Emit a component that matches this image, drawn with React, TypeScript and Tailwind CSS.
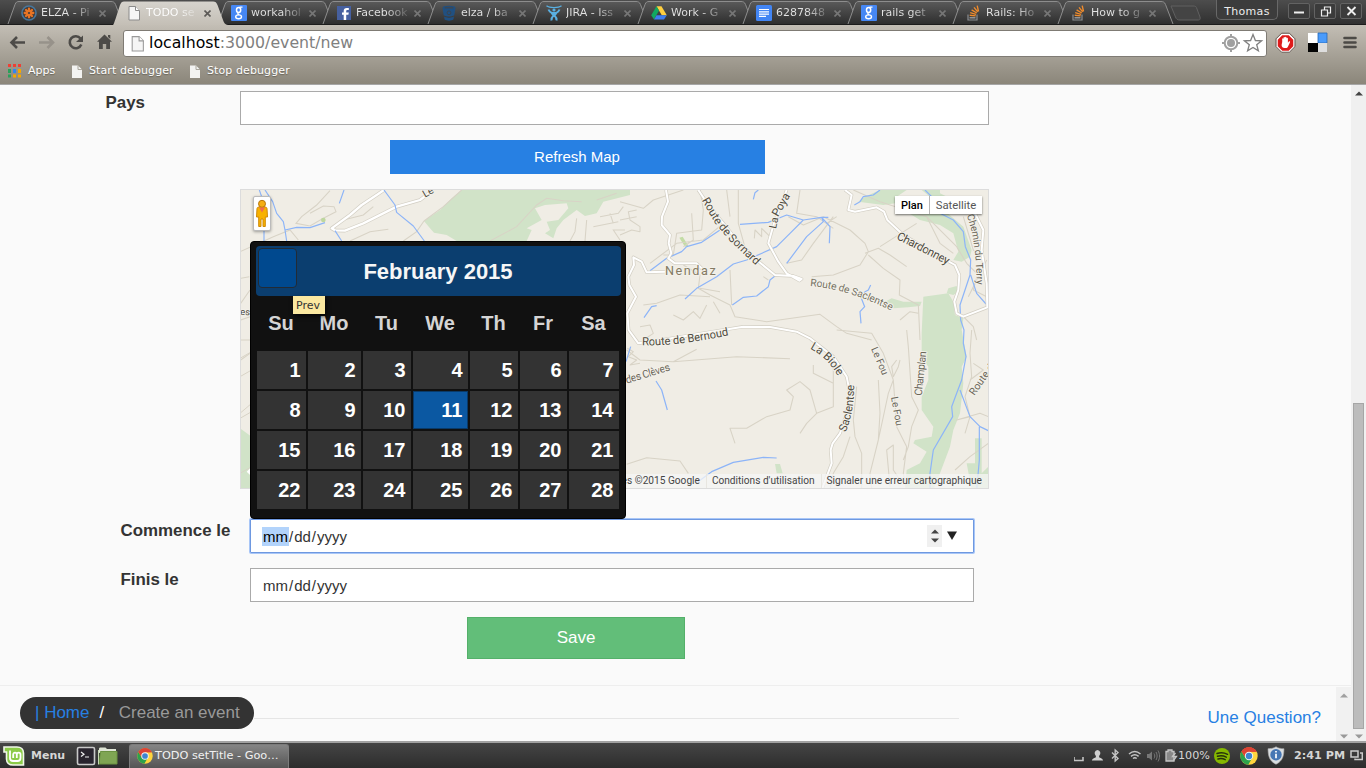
import React from "react";

const DEJAVU = "font-['DejaVu_Sans',sans-serif]";
const ARIAL = "font-['Liberation_Sans',sans-serif]";

/* ---------- favicons ---------- */

const GoogleIcon = () => (
  <svg width="16" height="16" viewBox="0 0 16 16">
    <rect width="16" height="16" rx="1" fill="#4687f4" />
    <g fill="none" stroke="#fff">
      <ellipse cx="7.6" cy="5" rx="2.1" ry="2.5" strokeWidth="1.5" />
      <ellipse cx="7.6" cy="11.8" rx="2.9" ry="1.9" strokeWidth="1.4" />
      <path d="M8.5 2.2h3M8.2 7.6c-2 .6-2 1.4 0 2.2" strokeWidth="1.2" />
    </g>
  </svg>
);

const ElzaIcon = () => (
  <svg width="16" height="16" viewBox="0 0 16 16">
    <circle cx="8" cy="8" r="7" fill="#463c38" stroke="#47779d" strokeWidth="1.6" />
    <g stroke="#e87424" strokeWidth="2.3" strokeLinecap="round">
      <path d="M8 3.7v8.600M3.700 8h8.600M5 5l6 6M11 5l-6 6" />
    </g>
    <circle cx="8" cy="8" r="1.1" fill="#463c38" />
  </svg>
);

const FileIcon = ({ size = 16, stroke = "#8b8b8b" }: { size?: number; stroke?: string }) => (
  <svg width={size} height={size} viewBox="0 0 16 16">
    <path d="M3 1.5h6.5l4 4v9.5H3z" fill="#f5f5f5" stroke={stroke} />
    <path d="M9.5 1.5v4h4" fill="#fff" stroke={stroke} />
  </svg>
);

const FacebookIcon = () => (
  <svg width="16" height="16" viewBox="0 0 16 16">
    <rect x="1" y="1" width="14" height="14" fill="#4660a0" />
    <path d="M10.2 15V9.8h2.2l.4-2.2h-2.6V6.3c0-.8.4-1.2 1.3-1.2h1.3V3h-2C8.700 3 7.700 4.200 7.700 6v1.600H6v2.200h1.700V15z" fill="#fff" />
  </svg>
);

const BucketIcon = () => (
  <svg width="16" height="16" viewBox="0 0 16 16">
    <path d="M1.500 3l1.200 7.200c2.500 1.700 8.100 1.700 10.600 0L14.500 3z" fill="#205081" />
    <path d="M3 11.600l.6 3c2 1.400 6.800 1.400 8.800 0l.6-3c-2.600 1.400-7.400 1.400-10 0z" fill="#205081" />
    <ellipse cx="8" cy="2.600" rx="6.500" ry="1.900" fill="#205081" />
    <ellipse cx="8" cy="2.700" rx="4.500" ry=".9" fill="#3c4754" />
    <circle cx="8" cy="7.800" r="1.900" fill="none" stroke="#3a4450" strokeWidth="1" />
  </svg>
);

const JiraIcon = () => (
  <svg width="16" height="16" viewBox="0 0 16 16" fill="none" stroke="#59afe1">
    <path d="M.5.8c3 2.400 12 2.400 15 0" strokeWidth="1.400" />
    <circle cx="8" cy="5" r="1.600" fill="#59afe1" stroke="none" />
    <path d="M2.500 4.500c1.200 3 3.500 3.600 5.500 3.600s4.300-.6 5.500-3.600M5.600 8c1.300 1.500 3.500 1.500 4.800 0M5.500 15.500c-.5-3 1-4 2.500-5.500 1.500 1.500 3 2.500 2.500 5.500M5.700 8.300L8 10.500l2.300-2.200" strokeWidth="2" />
  </svg>
);

const DriveIcon = () => (
  <svg width="16" height="16" viewBox="0 0 16 16">
    <path d="M5.500 1.200h5l5.300 9h-5z" fill="#ffcf3f" />
    <path d="M5.500 1.200L8 5.500l-5 9-2.800-4.300z" fill="#11a861" />
    <path d="M5.500 10.200h10.300L13 14.600H3z" fill="#3e7ef0" />
  </svg>
);

const DocsIcon = () => (
  <svg width="16" height="16" viewBox="0 0 16 16">
    <rect width="16" height="16" rx="1.500" fill="#4285f4" />
    <path d="M3 4.500h10M3 6.800h10M3 9.100h10M3 11.400h7" stroke="#fff" strokeWidth="1.200" />
  </svg>
);

const StackIcon = () => (
  <svg width="16" height="16" viewBox="0 0 16 16" fill="none">
    <path d="M2 9.500v5.500h9V9.500" stroke="#8a8d90" strokeWidth="1.200" />
    <path d="M3.500 12.800h6" stroke="#9b9da0" strokeWidth="1.400" />
    <path d="M3.700 10.300l6 .6M4.200 7.600l5.800 1.700M5.600 4.800l5.200 3.200M8 2.400l3.700 4.500M11.200.6l1.300 5.900" stroke="#ef8b2c" strokeWidth="1.400" />
  </svg>
);

const ChromeIcon = ({ size }: { size: number }) => (
  <svg width={size} height={size} viewBox="0 0 18 18">
    <circle cx="9" cy="9" r="8.700" fill="#ffd53e" />
    <path d="M9 9L1.500 4.600A8.700 8.700 0 0 1 16.600 4.800H9z" fill="#dd4335" />
    <path d="M1.500 4.600A8.700 8.700 0 0 0 8.300 17.700l4-7L9 9 5.600 11z" fill="#2da24c" />
    <path d="M9 4.800h7.600A8.700 8.700 0 0 0 1.500 4.600L5.400 11z" fill="#dd4335" />
    <circle cx="9" cy="9" r="4.200" fill="#f3f3f3" />
    <circle cx="9" cy="9" r="3.200" fill="#3f85cf" />
  </svg>
);

/* ---------- window chrome ---------- */

const tabs: { title: string; icon: React.ReactNode; active?: boolean }[] = [
  { title: "ELZA - Pi", icon: <ElzaIcon /> },
  { title: "TODO se", icon: <FileIcon />, active: true },
  { title: "workahol", icon: <GoogleIcon /> },
  { title: "Facebook", icon: <FacebookIcon /> },
  { title: "elza / ba", icon: <BucketIcon /> },
  { title: "JIRA - Iss", icon: <JiraIcon /> },
  { title: "Work - G", icon: <DriveIcon /> },
  { title: "6287848", icon: <DocsIcon /> },
  { title: "rails get", icon: <GoogleIcon /> },
  { title: "Rails: Ho", icon: <StackIcon /> },
  { title: "How to g", icon: <StackIcon /> },
];

const TabStrip = () => (
  <div className="relative flex h-[25px] shrink-0 border-b border-[#1c1c1c] bg-linear-to-b from-[#4d4d4d] to-[#303030] pl-[8px]">
    {tabs.map((t, i) => (
      <div key={i} className={t.active ? "relative z-10 flex h-[25px] w-[105px] shrink-0 items-center pl-[13px]" : "relative flex h-[25px] w-[105px] shrink-0 items-center pl-[13px]"}>
        <svg className="absolute top-0 left-0 overflow-visible" width="118" height="25" viewBox="0 0 118 25">
          <defs>
            <linearGradient id="tabOff" x1="0" y1="0" x2="0" y2="1">
              <stop offset="0" stopColor="#5a5a5a" />
              <stop offset="1" stopColor="#2e2e2e" />
            </linearGradient>
            <linearGradient id="tabOn" x1="0" y1="0" x2="0" y2="1">
              <stop offset="0" stopColor="#d6d3cd" />
              <stop offset="1" stopColor="#c4bfb6" />
            </linearGradient>
          </defs>
          {t.active ? (
            <path d="M3 25C4 24 4.500 21.500 5.500 19L10 5C11 2.500 12 1.500 14 1.500H103C105.500 1.500 106.500 2.500 107.500 5L113 20C114 23 115 24.500 118 25Z" transform="translate(-3 0)" fill="url(#tabOn)" />
          ) : (
            <path d="M0 24L7 4.500C8 2 9 1.500 11 1.500H103C105 1.500 106.500 2 107.500 4.500L115 24" fill="url(#tabOff)" stroke="#8d8d8d" />
          )}
        </svg>
        <span className="relative w-4">{t.icon}</span>
        <span className={t.active
          ? `relative ml-[4px] w-[51px] whitespace-nowrap bg-linear-to-r from-white from-60% to-white/20 bg-clip-text text-[11px] leading-[16px] text-transparent ${DEJAVU}`
          : `relative ml-[4px] w-[51px] whitespace-nowrap bg-linear-to-r from-[#e4e4e4] from-60% to-[#e4e4e4]/20 bg-clip-text text-[11px] leading-[16px] text-transparent ${DEJAVU}`}>
          {t.title}
        </span>
        <svg className="relative mt-px ml-[7px]" width="7" height="7" viewBox="0 0 7 7">
          <path d="M.5.500l6 6M6.500.500l-6 6" stroke={t.active ? "#5c5a57" : "#777"} strokeWidth="1.600" />
        </svg>
      </div>
    ))}
    <svg className="mt-[5px] ml-[7px]" width="32" height="16" viewBox="0 0 32 16">
      <path d="M1 1h22c3 0 3 .5 4 3l3 8c.5 2 0 3-1.500 3H10c-2.500 0-3.500-.5-4.500-3z" fill="#444" stroke="#606060" />
    </svg>
    <div className="ml-auto flex pr-[4px]">
      <div className={`mr-[6px] h-[20px] w-[62px] rounded-b-[5px] border border-t-0 border-[#686868] bg-[#3c3c3c] text-center text-[11px] leading-[23px] tracking-[0.3px] text-[#ececec] ${DEJAVU}`}>Thomas</div>
      {[
        <path d="M5 10h10" strokeWidth="2" />,
        <path d="M6.500 7.500h6v6h-6zM9.500 7V4.500h6v6H13" strokeWidth="1.200" />,
        <path d="M6.500 4.500l8 8M14.500 4.500l-8 8" strokeWidth="1.800" />,
      ].map((p, i) => (
        <div key={i} className="mt-[3px] ml-[4px] h-[16px] w-[22px] rounded-[2px] border border-[#636363] bg-[#3b3b3b]">
          <svg width="20" height="14" viewBox="0 1.5 20 14" fill="none" stroke="#eee">{p}</svg>
        </div>
      ))}
    </div>
  </div>
);

const BookmarkFile = () => (
  <svg width="10" height="13" viewBox="0 0 10 13">
    <path d="M0 .500h6l4 4V13H0z" fill="#f3f3f1" />
    <path d="M6 .500v4h4" fill="none" stroke="#aaa69c" />
  </svg>
);

const Toolbar = () => (
  <div className="flex h-[60px] shrink-0 flex-col border-b border-[#a6a6a6] bg-linear-to-b from-[#c3beb5] to-[#8b867a]">
    <div className="flex h-[35px] shrink-0 items-center pt-[1px]">
      <svg width="123" height="30" viewBox="0 0 123 30" fill="none">
        <g stroke="#4d4b48" strokeWidth="2.600">
          <path d="M25 14.500H12M17 9l-5.500 5.500L17 20" />
          <path d="M39 14.500h13M47.500 9l5.500 5.500-5.500 5.500" stroke="#97928a" />
          <path d="M80.500 10.500a6 6 0 1 0 .8 6" />
        </g>
        <path d="M83 7.500v6.500h-7z" fill="#4d4b48" />
        <path d="M104.500 6.500l7.500 7.300h-2V21h-3.800v-5h-3.400v5H99v-7.200h-2zM108 7h2.300v4L108 9z" fill="#4d4b48" />
      </svg>
      <div className="flex h-[27px] w-[1144px] items-center rounded-[3px] border border-[#7f7b74] bg-white pl-[5px]">
        <FileIcon size={17} stroke="#999" />
        <span className={`ml-[3px] text-[15.750px] leading-[20px] text-[#808080] ${DEJAVU}`}><span className="text-black">localhost</span>:3000/event/new</span>
        <svg className="ml-auto" width="44" height="22" viewBox="0 0 44 22" fill="none">
          <circle cx="9" cy="11" r="6.300" stroke="#a0a0a0" strokeWidth="2" />
          <circle cx="9" cy="11" r="4" fill="#a0a0a0" />
          <path d="M9 2v3M9 17v3M0 11h3M15 11h3" stroke="#a0a0a0" strokeWidth="2" />
          <path d="M31 2.500l2.400 6 6.200.3-4.900 3.900 1.700 6.200L31 15.400l-5.400 3.500 1.700-6.200-4.900-3.900 6.200-.3z" stroke="#808080" strokeWidth="1.300" />
        </svg>
      </div>
      <svg className="ml-[6px]" width="90" height="24" viewBox="0 0 90 24">
        <path d="M9.500 2.500h7l5 5v7l-5 5h-7l-5-5v-7z" transform="translate(-.5 1)" fill="#de1b1b" stroke="#fff" strokeWidth="1.500" />
        <path d="M8.600 2.200h7.800l5.600 5.600v7.800l-5.600 5.600H8.600L3 15.600V7.800z" fill="none" stroke="#5d504a" strokeWidth=".9" />
        <path d="M9.200 11V8c0-1 1.300-1 1.300 0V6.800c0-1 1.500-1 1.500 0v-.3c0-1 1.500-1 1.500 0v1c0-1 1.400-1 1.400 0v4.200l1-1.200c.8-.6 1.500 0 1 .9l-2 4.300c-.4.900-1 1.200-2 1.200h-1.400c-1.700 0-2.900-1.200-2.900-3z" fill="#fff" />
        <path d="M35 2h10v10H35z" fill="#fff" />
        <path d="M45 2h9v10h-9z" fill="#4a9bfb" stroke="#2768b5" strokeWidth=".8" />
        <path d="M35 12h10v9H35z" fill="#050505" />
        <path d="M45 12h9v9h-9z" fill="#dedede" />
        <path d="M71.500 7h11M71.500 11.500h11M71.500 16h11" stroke="#4c4a46" strokeWidth="2.600" strokeLinecap="round" />
      </svg>
    </div>
    <div className={`mt-px flex h-[20px] shrink-0 items-center pl-[8px] text-[11px] leading-[16px] text-white [text-shadow:0_1px_1px_rgba(60,55,45,.5)] ${DEJAVU}`}>
      <svg className="mb-px" width="13" height="14" viewBox="0 0 13 14">
        <path d="M0 0h3v3H0zM5 0h3v3H5zM10 0h3v3h-3z" fill="#ee4035" />
        <path d="M0 5h3v4H0z" fill="#2ba05a" /><path d="M5 5h3v4H5z" fill="#3385f0" /><path d="M10 5h3v4h-3z" fill="#f5a800" />
        <path d="M0 10.500h3v3H0z" fill="#2ba05a" /><path d="M5 10.500h3v3H5zM10 10.500h3v3h-3z" fill="#f5a800" />
      </svg>
      <span className="ml-[7px] w-[44px]">Apps</span>
      <BookmarkFile />
      <span className="ml-[7px] w-[101px] tracking-[0.100px]">Start debugger</span>
      <BookmarkFile />
      <span className="ml-[7px] tracking-[0.100px]">Stop debugger</span>
    </div>
  </div>
);

/* ---------- map ---------- */

const third = "scale(.33333)";
const halo = { stroke: "#f3f1ea", strokeWidth: 6, paintOrder: "stroke" as const, strokeLinejoin: "round" as const };

const white = [
  "M138 30L144 65L126 110L125 135L150 165L146 190L154 220L145 235L165 250L230 250L250 270",
  "M235 30L265 75L310 130L350 180L410 240L465 285L520 288L545 297L538 302L500 280L475 245L445 190L462 130L500 30",
  "M675 30L695 45L685 90L705 95L770 82L792 95L802 120L850 165L960 230L1005 255L1018 285L1015 330L1003 365L1010 400L1030 410L1102 382L1100 310L1085 210L1090 150L1050 70",
  "M135 275L80 277L65 245L40 232L42 255L25 290L28 315L48 350L22 400L26 450L55 490L90 485L210 466L370 440L450 441L530 455L570 475L640 530L680 590L690 640L680 700L660 760L638 790L632 810L635 850L605 930",
];

const roads = [
  "M0 165L35 150L60 155L60 140L30 120L25 95L50 90M0 65L70 85L100 60L190 30M240 30L250 90L245 150L170 160L160 225L130 225M215 100L220 180L190 200M355 30L355 130L380 220M90 250L170 190L250 180L310 130M320 30L330 110M0 120L50 110",
  "M500 250L545 240L580 190L640 110M505 110L550 135L610 110L690 150L735 190L745 215L720 255L640 285L575 290M735 220L775 205L810 225L860 260M745 225L790 265L840 300L838 345L895 375L900 480M620 130L650 110M1030 410L1060 440L1070 480M1100 240L1070 300L1045 350",
  "M190 255L240 285L235 325L270 345L330 375L345 410L440 425L600 403L650 440L680 460L755 480M270 350L180 345L110 370L70 375M160 405L190 420L220 395L240 415L260 375M240 325L300 335M280 365L300 400M430 290L445 300M330 270L335 375M60 440L90 435L100 460L70 480M780 200L890 130M540 30L530 100L590 110L640 145",
  "M700 30L780 65L920 110L1010 200L1040 250L1080 290M920 110L960 190L1000 220M840 420L870 395L895 400M1070 290L1060 330L1100 350M1085 230L1060 210L1030 110",
  "M20 510L60 540L160 545L350 530L510 536M160 545L230 508M580 555L580 580L640 610L640 560M345 790L330 745L380 745L440 710L510 690L520 650L500 630L540 605L570 630L590 700L640 680L640 600M540 760L560 730L590 700M20 853L80 833L180 843L205 880",
  "M710 620L700 720L705 770L725 820L725 930M690 770L670 830L640 880L630 930M775 600L780 700L775 780L750 880L755 930M775 780L805 640L820 600L830 740L860 800L850 880L860 930M820 600L790 520L755 460L650 450M860 450L865 500L875 650L895 690L875 740L865 800L850 840M1055 450L1050 520L1055 590L1035 650L1050 710L1010 720L1080 700L1105 710M1035 760L1050 710M1005 870L1050 830L1105 790M1050 600L1090 570L1060 550M830 540L815 560L820 590L835 560L840 540M810 920L800 810L820 795L820 870L840 900",
];

const water = [
  "M90 272L140 235L185 215L200 200L245 187L300 150M195 357L230 325L290 290L340 252L380 240L470 200L510 160L550 120L500 105L445 127L360 133M500 250L560 170L610 125L605 112L550 120M605 112L630 140L628 190M605 112L625 112M415 30L405 38L400 58M337 375L370 352L410 348L445 320L450 300L465 288M72 413L95 380L110 377M752 315L745 330L735 335L724 355L734 380L720 395L723 430M703 75L720 65L730 50L760 45L780 30",
  "M915 30L960 75L960 100L1000 120L1030 155L1036 200L1052 240L1050 285L1020 375L1022 420L1032 450L1030 490L1038 530L1025 600L1010 640L995 680L998 710L940 810L930 880L930 930M1052 285L1070 340L1098 372M1020 630L1050 710L1080 740L1105 752M1078 740L1078 840L1070 930",
  "M32 500L18 545M108 603L125 630L142 690M230 908L275 875L340 847L430 832L470 834",
];

const Label = ({ x, y, r, s = 31, c = "#4f4b40", w, children }: { x: number; y: number; r: number; s?: number; c?: string; w?: number; children: string }) => (
  <text transform={`translate(${x} ${y}) rotate(${r})`} fontSize={s} fill={c} textLength={w} {...halo}>{children}</text>
);

const MapDrawing = () => (
  <svg className="block" width="747" height="298" viewBox="241 190 747 298" fontFamily="Roboto, sans-serif">
    <rect x="240" y="189" width="749" height="300" fill="#f0ede5" />

    <g transform={`translate(230 180) ${third}`}>
      <path d="M695 30L665 55L630 90L582 123L600 145L612 158L650 165L680 183L890 183L905 150L890 145L935 120L915 85L945 75L1010 70L1015 85L985 120L950 125L960 150L945 160L970 175L980 145L1000 120L1040 90L1065 108L1100 100L1120 65L1200 45L1200 30Z" fill="#d1e3c8" />
      <g fill="none" stroke="#d8d3c6" strokeWidth="3.200">
        <path d="M300 32L260 75L215 110L198 130L240 138L280 115L318 95L312 80L280 78L240 100M30 215L75 195L130 170L180 150L205 180M340 120L400 105L430 80M582 123L560 155L520 183M582 123L640 80L695 30M780 183L860 140L920 75L950 55L1000 62L1055 65M360 183L420 155L475 148M1040 115L1035 155L1020 183M1070 120L1065 183M1090 140L1165 125M1110 110L1165 100L1180 80M1140 100L1150 130M1185 150L1150 150L1170 180M1100 60L1160 40" />
        <path d="M32 295L58 290M32 370L60 330M32 420L60 410M32 480L60 480M32 540L60 520" />
      </g>
      <g fill="none" strokeLinejoin="round">
        <path d="M462 30L440 45L395 75L360 105L305 145L315 151L345 152L400 130L500 80L570 60L610 30" stroke="#d2cec3" strokeWidth="11" />
        <path d="M462 30L440 45L395 75L360 105L305 145L315 151L345 152L400 130L500 80L570 60L610 30" stroke="#fff" strokeWidth="7" />
        <path d="M88 30L102 70L102 183M105 30L128 65L140 100L160 125L165 150L170 183M165 150L200 142L240 143L285 128M342 30L328 70M462 30L495 75L500 97L550 138L583 183M315 152L335 183" stroke="#8cb4f8" strokeWidth="3.500" />
      </g>
      <circle cx="280" cy="120" r="7" fill="#bdd79e" />
      <Label x={585} y={53} r={-30}>Le</Label>
      <Label x={30} y={404} r={5} s={28}>es</Label>
    </g>

    <g transform={`translate(240 340) ${third}`}>
      <path d="M0 265L35 290V450H0Z" fill="#d1e3c8" />
      <path d="M0 55L35 35M0 110L35 90M0 220L35 190M0 235L35 215M0 400L35 380" fill="none" stroke="#d8d3c6" strokeWidth="3" />
      <path d="M35 385L25 395L35 405" fill="none" stroke="#fff" strokeWidth="7" />
    </g>

    <g transform={`translate(620 180) ${third}`}>
      <g fill="#d1e3c8">
        <path d="M0 30H20V36L0 40ZM735 50L780 30H860L830 50L825 70L790 75L715 65ZM860 95L900 120L960 135L1000 160L1015 215L1000 240L1025 245L1050 230L1055 210L1030 140L965 85L1000 60L960 40L960 30H905L930 50L900 80ZM795 365L815 355L850 365L905 365L900 378L865 382L820 385ZM985 325L1010 318L1015 335L1000 345L980 340Z" />
        <path d="M910 350L985 340L1000 365L1005 405L1030 415L1025 450L1040 530L1025 560L1030 610L1020 700L1000 750L990 800L960 880L940 930H855L860 870L900 850L920 815L880 790L885 780L935 770L940 740L905 690L905 650L925 600L925 560L905 530L905 460Z" />
        <path d="M1065 775L1085 775V880L1105 860V930H1055L1040 850L1065 850Z" />
        <path d="M465 852H480L488 880H470Z" />
      </g>
      <path d="M178 173L188 170L205 197L195 200Z" fill="#c3dca5" />
      <g fill="none" stroke="#d8d3c6" strokeWidth="3.200" strokeLinejoin="round">
        {roads.map((d, i) => <path key={i} d={d} />)}
        <path d="M403 175L405 150L425 170L425 145L450 170M22 505L40 515L25 530L50 540L30 555L60 550" />
      </g>
      <g fill="none" stroke="#8cb4f8" strokeWidth="3.600" strokeLinejoin="round">
        {water.map((d, i) => <path key={i} d={d} />)}
      </g>
      <g fill="none" strokeLinejoin="round">
        {white.map((d, i) => <path key={i} d={d} stroke="#d2cec3" strokeWidth="10" />)}
        {white.map((d, i) => <path key={i} d={d} stroke="#fff" strokeWidth="6" />)}
      </g>
      <path id="sornard" d="M245 61L286 131L328 181L420 268" fill="none" />
      <path id="saclentse" d="M570 318Q690 328 830 400" fill="none" />
      <path id="biole" d="M570 506Q630 537 662 604" fill="none" />
      <path id="chemin" d="M1040 107Q1070 180 1070 330" fill="none" />
      <path id="bernoud" d="M66 496Q170 500 345 462" fill="none" />
      <path id="sacl2" d="M676 757Q704 700 703 590" fill="none" />
      <g fill="#4f4b40" fontSize="34" {...halo}>
        <text textLength="256"><textPath href="#sornard">Route de Sornard</textPath></text>
        <text fill="#767163" fontSize="31" textLength="256"><textPath href="#saclentse">Route de Saclentse</textPath></text>
        <text textLength="119"><textPath href="#biole">La Biole</textPath></text>
        <text fontSize="30" fill="#6a6558" textLength="211"><textPath href="#chemin">Chemin du Terry</textPath></text>
        <text textLength="263"><textPath href="#bernoud">Route de Bernoud</textPath></text>
        <text textLength="146"><textPath href="#sacl2">Saclentse</textPath></text>
      </g>
      <Label x={468} y={147} r={-78}>La</Label>
      <Label x={474} y={112} r={-60} s={34}>Poya</Label>
      <Label x={828} y={176} r={27} s={35} w={172}>Chardonney</Label>
      <Label x={753} y={506} r={67} s={30} c="#6a6558" w={88}>Le Fou</Label>
      <Label x={813} y={652} r={80} s={30} c="#6a6558" w={88}>Le Fou</Label>
      <Label x={905} y={648} r={-84} s={32} c="#6a6558" w={134}>Champlan</Label>
      <Label x={1063} y={648} r={-55} s={31} c="#6a6558">Route du</Label>
      <Label x={20} y={611} r={-17} s={32} c="#6a6558" w={138}>des Clèves</Label>
      <text x="135" y="284" fontSize="38" letterSpacing="5" textLength="157" fill="#847a63" {...halo}>Nendaz</text>
    </g>
  </svg>
);

const EventMap = () => (
  <div className="relative mt-[15px] ml-[240px] h-[300px] w-[749px] overflow-hidden border border-[#dcdcdc] font-['Roboto',sans-serif]">
    <MapDrawing />
    <div className="absolute top-[6px] left-[12px] h-[35px] w-[18px] rounded-[2px] border border-[#bbb] bg-white shadow-[0_1px_3px_rgba(0,0,0,.35)]">
      <svg width="16" height="33" viewBox="0 0 16 33">
        <path d="M3 11.500c0-1 1-1.500 2-1.500h6c1 0 2 .5 2 1.500l.5 8.500h-2.200v9.500H9V22H7v7.500H4.700V20H2.500z" fill="#f8b200" stroke="#cf8a08" />
        <circle cx="8" cy="6.800" r="3.500" fill="#f5ae13" stroke="#b5750e" />
        <path d="M5 10.500h6l-3 5z" fill="#f06d50" />
      </svg>
    </div>
    <div className="absolute top-[6px] right-[6px] flex h-[18px] w-[87px] bg-white text-[11px] leading-[19px] shadow-[0_1px_2px_rgba(0,0,0,.55)]">
      <span className="w-[35px] border-r border-[#b5b5b5] text-center font-medium text-black">Plan</span>
      <span className="flex-1 text-center text-[11.300px] text-[#565656]">Satellite</span>
    </div>
    <div className="absolute right-0 bottom-0 flex h-[14px] items-center bg-[#f5f5f5]/75 pr-[6px] text-[10.150px] leading-[14px] whitespace-nowrap text-[#444]">
      <span>es ©2015 Google</span>
      <span className="ml-[6px] border-l border-[#e8e6e0] pl-[5px]">Conditions d'utilisation</span>
      <span className="ml-[6px] border-l border-[#e8e6e0] pl-[5px]">Signaler une erreur cartographique</span>
    </div>
  </div>
);

/* ---------- page ---------- */

const days = ["Su", "Mo", "Tu", "We", "Th", "Fr", "Sa"];
const numbers = Array.from({ length: 28 }, (_, i) => i + 1);

const DatePicker = () => (
  <div className="absolute top-[-278px] left-[250px] z-10 h-[278px] w-[376px] rounded-[4px] border border-black bg-[#111] pt-[4px] pl-[5px] font-bold">
    <div className="flex h-[50px] w-[365px] items-center justify-center rounded-[4px] bg-[#0b3e6f] pr-px text-[22px] text-[#f6f6f6]">February 2015</div>
    <div className="absolute top-[6px] left-[7px] h-[40px] w-[39px] rounded-[4px] border border-[#222b35] bg-[#00498f]" />
    <div className="ml-px grid h-[54px] grid-cols-[49px_53px_48px_55px_48px_47px_50px] items-center gap-x-[2px] text-center text-[20px] text-[#d5d5d5]">
      {days.map((d) => <span key={d} className="pr-px">{d}</span>)}
    </div>
    <div className="mt-px ml-px grid auto-rows-[38px] grid-cols-[49px_53px_48px_55px_48px_47px_50px] gap-[2px] text-right text-[20px] leading-[38px] text-white">
      {numbers.map((n) => (
        <span key={n} className={n === 11 ? "border border-[#0a3a68] bg-[#0b58a2] pr-[4.500px] leading-[36px]" : "bg-[#333] pr-[5.500px]"}>{n}</span>
      ))}
    </div>
    <div className={`absolute top-[54px] left-[42px] h-[18px] w-[32px] bg-[#fbe8a0] pl-[3px] text-[11px] leading-[19px] font-normal text-[#333] shadow-[1px_2px_4px_rgba(0,0,0,.8)] ${DEJAVU}`}>Prev</div>
  </div>
);

const DateText = ({ selected }: { selected?: boolean }) => (
  <span className="flex items-center text-[15px] leading-[19px] text-[#333]">
    <span className={selected ? "bg-[#b2d3fb] px-px text-black" : "px-px"}>mm</span>/<span className="px-[1px]">dd</span>/<span className="pl-px">yyyy</span>
  </span>
);

const Arrow = ({ up, color }: { up?: boolean; color: string }) => (
  <svg width="8" height="5" viewBox="0 0 8 5"><path d={up ? "M0 4.500h8L4 .500z" : "M0 .500h8L4 4.500z"} fill={color} /></svg>
);

const Page = () => (
  <div className={`relative flex min-h-0 flex-1 bg-[#fafafa] text-[#333] ${ARIAL}`}>
    <div className="flex w-[1351px] flex-col pt-[6px]">
      <div className="flex h-[34px] pl-[105.500px]">
        <label className="w-[134.500px] text-[16.900px] leading-[23px] font-bold">Pays</label>
        <div className="w-[749px] border border-[#aaa] bg-white" />
      </div>
      <div className="mt-[15px] ml-[390px] h-[34px] w-[375px] bg-[#2780e3] pr-px text-center text-[15px] leading-[34px] text-white">Refresh Map</div>
      <EventMap />
      <div className="relative mt-[30px] flex h-[34px] pl-[120.500px]">
        <DatePicker />
        <label className="w-[129.500px] text-[16.900px] leading-[23px] font-bold">Commence le</label>
        <div className="flex w-[724px] items-center rounded-[1px] border border-[#6e98e0] bg-white pt-px pr-[16px] pl-[11px] shadow-[0_0_0_1px_#a8c6f7]">
          <DateText selected />
          <div className="mb-px ml-auto flex h-[22px] w-[15px] flex-col items-center justify-between bg-[#f0f0f0] py-[4px]">
            <Arrow up color="#444" />
            <Arrow color="#444" />
          </div>
          <svg className="mb-[2px] ml-[5px]" width="10" height="9" viewBox="0 0 10 9"><path d="M0 .500h10L5 9z" fill="#222" /></svg>
        </div>
      </div>
      <div className="mt-[15px] flex h-[34px] pl-[120.500px]">
        <label className="w-[129.500px] text-[16.900px] leading-[23px] font-bold">Finis le</label>
        <div className="flex w-[724px] items-center border border-[#aaa] bg-white pt-px pl-[11px]"><DateText /></div>
      </div>
      <div className="mt-[15px] ml-[467px] h-[42px] w-[218px] border border-[#54b06a] bg-[#62be79] text-center text-[17px] leading-[40px] text-white">Save</div>
      <div className="mt-[26px] flex min-h-0 flex-1 border-t border-[#eee]">
        <div className="mt-[11px] ml-[20px] flex h-[32px] w-[234px] items-center rounded-full bg-[#333] pl-[15px] text-[17px] whitespace-pre">
          <span className="text-[#2780e3]">| Home</span>
          <span className="ml-[10px] text-white">/</span>
          <span className="ml-[14.500px] text-[#999]">Create an event</span>
        </div>
        <div className="mt-[32px] h-px w-[705px] bg-[#e5e5e5]" />
        <div className="ml-auto pt-[20px] pr-[15px] text-[17px] leading-[24px] text-[#2780e3]">Une Question?</div>
        <div className="mt-px flex w-[15px] flex-col items-center justify-between bg-[#f1f1f1] pt-[6px] pb-[2px]">
          <Arrow up color="#a0a0a0" />
          <Arrow color="#999" />
        </div>
      </div>
    </div>
    <div className="flex w-[15px] flex-col items-center bg-[#f0f0f0] pt-[6px] pb-[2px]">
      <Arrow up color="#444" />
      <div className="mt-[307px] h-[326px] w-[11px] border border-[#a6a6a6] bg-[#bcbcbc]" />
      <div className="mt-auto"><Arrow color="#999" /></div>
    </div>
  </div>
);

/* ---------- taskbar ---------- */

const Taskbar = () => (
  <div className={`flex h-[27px] shrink-0 items-center border-t-2 border-[#a2a2a2] bg-linear-to-b from-[#454545] to-[#2d2d2d] pl-[3px] text-[11px] text-[#d6d6d6] ${DEJAVU}`}>
    <svg width="22" height="20" viewBox="0 0 22 20">
      <path d="M1 1h13c4 0 6.500 2.500 6.500 6v12H10c-4 0-6.500-2.500-6.500-6V6H1z" fill="#8ccb49" stroke="#f1f7ea" strokeWidth="1.600" />
      <path d="M7 4.500v7.500c0 2 1 3 3 3h4.500c2 0 3-1 3-3V8.500c0-2.500-3.700-2.500-3.700 0V12M13.800 8.500c0-2.500-3.600-2.500-3.600 0V12" fill="none" stroke="#fff" strokeWidth="1.800" />
    </svg>
    <span className="mt-px ml-[6px] w-[45px] text-[11px] font-bold">Menu</span>
    <svg width="44" height="20" viewBox="0 0 44 20">
      <rect x="1.500" y="1.500" width="17" height="17" rx="1.500" fill="#29242e" stroke="#c9c9c9" strokeWidth="1.600" />
      <path d="M5 6l3 2.200L5 10.500M9 11h4" fill="none" stroke="#eee" strokeWidth="1.200" />
      <path d="M23 3c0-1 .5-1.500 1.500-1.500h5L31 3h9v4H23z" fill="#dfe5d6" />
      <path d="M23 18l1.500-12.500H41V18z" fill="#7fa553" stroke="#6a9140" />
      <path d="M22.500 18.500V4" stroke="#c8d8b4" />
    </svg>
    <div className="ml-[9px] flex h-[24px] w-[160px] items-center rounded-t-[3px] border border-b-0 border-[#7c7c7c] bg-linear-to-b from-[#858585] to-[#555] pl-[7px] text-[#f1f1f1]">
      <ChromeIcon size={16} />
      <span className="ml-[2px] text-[11.300px] whitespace-nowrap">TODO setTitle - Goo…</span>
    </div>
    <svg className="ml-auto" width="105" height="20" viewBox="0 0 105 20" fill="none" stroke="#c4c4c4">
      <path d="M0 11v3.500h9V11" strokeWidth="1.600" />
      <path d="M23.500 4a3 3.300 0 0 1 1.600 6v1.200c1 .9 3.400.8 4 3.300H17.900c.6-2.500 3-2.400 4-3.300V10A3 3.300 0 0 1 23.500 4z" fill="#d0d0d0" stroke="none" />
      <path d="M38 6.500l6 6-2.800 2.500V4L44 6.500l-6 6" strokeWidth="1.400" />
      <path d="M55 8c3.500-3 8-3 11.500 0M57 10.300c2.500-2 5.200-2 7.600 0M59 12.500c1.200-1 2.500-1 3.700 0" strokeWidth="1.500" />
      <path d="M73 8v4h2l3 2.500v-9L75 8z" fill="#777" stroke="none" />
      <path d="M80 7.500c1 1.500 1 3.500 0 5M82 6c1.500 2.500 1.500 5.500 0 8M84 4.500c2 3.500 2 7.500 0 11" stroke="#777" />
      <path d="M92 5.500h2V4h4v1.500h2V9l-1 1 1 1v4h-8z" fill="#888" strokeWidth="1.300" />
      <path d="M101.500 7l-3 3.500h4l-3 4" strokeWidth="1.300" />
    </svg>
    <span className="mt-px -ml-px w-[35px] text-[11.200px]">100%</span>
    <svg width="18" height="18" viewBox="0 0 18 18">
      <circle cx="9" cy="9" r="8" fill="#85b800" />
      <path d="M4 6.500c3.500-1.200 7.500-.8 10.500.8M4.500 9.300c3-.9 6-.6 8.800.8M5 12c2.500-.7 5-.5 7.200.7" fill="none" stroke="#25310a" strokeWidth="1.500" strokeLinecap="round" />
    </svg>
    <span className="ml-[9px]"><ChromeIcon size={18} /></span>
    <svg className="ml-[9px]" width="18" height="19" viewBox="0 0 18 19">
      <path d="M9 .700c2 1.500 5 2 8 2-.2 7-1 12-8 15.600C2 14.700 1.200 9.700 1 2.700c3 0 6-.5 8-2z" fill="#d9dde0" stroke="#aaa" strokeWidth=".6" />
      <circle cx="9" cy="8.800" r="5.700" fill="#4677b4" />
      <path d="M9 7.700v4.600M9 5v1.600" stroke="#fff" strokeWidth="1.700" />
    </svg>
    <span className="mt-px ml-[9px] w-[56px] text-[11.200px] font-bold whitespace-nowrap">2:41 PM</span>
    <svg className="mr-[3px]" width="13" height="13" viewBox="0 0 13 13" fill="none" stroke="#ccc" strokeWidth="1.500">
      <path d="M1 2h7v6H1zM10 4h2.300v6.500H5V9.500" />
    </svg>
  </div>
);

export default function App() {
  return (
    <div className="flex h-[768px] w-[1366px] flex-col overflow-hidden bg-[#fafafa]">
      <TabStrip />
      <Toolbar />
      <Page />
      <Taskbar />
    </div>
  );
}
